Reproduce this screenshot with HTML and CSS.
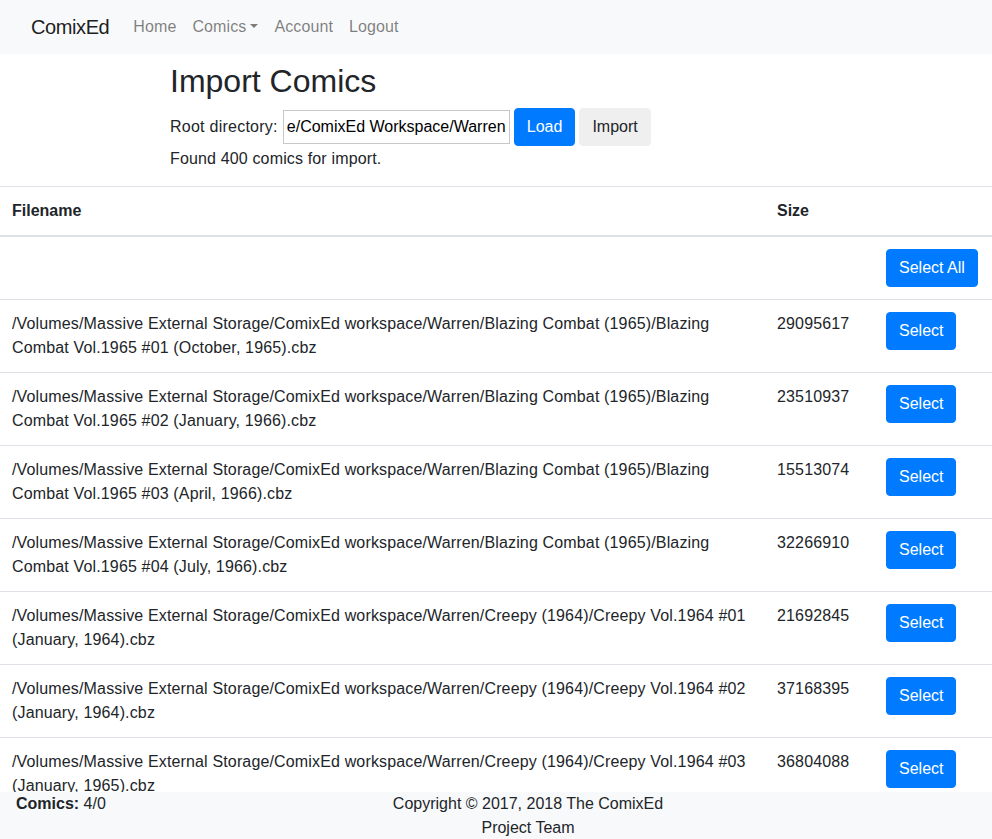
FILE: index.html
```html
<!DOCTYPE html>
<html lang="en">
<head>
<meta charset="utf-8">
<title>ComixEd - Import Comics</title>
<link rel="stylesheet" href="styles.css">
</head>
<body>
<nav class="navbar">
  <a class="brand" href="#">ComixEd</a>
  <ul class="nav">
    <li><a class="nav-link" href="#">Home</a></li>
    <li><a class="nav-link dropdown-toggle" href="#">Comics</a></li>
    <li><a class="nav-link" href="#">Account</a></li>
    <li><a class="nav-link" href="#">Logout</a></li>
  </ul>
</nav>

<main class="page">
  <section class="import-head">
    <h2 class="title">Import Comics</h2>
    <div class="dir-row">
      <label class="dir-label" for="rootdir">Root directory:</label>
      <input id="rootdir" class="dir-input" type="text" value="e/ComixEd Workspace/Warren">
      <button class="btn btn-primary" type="button">Load</button>
      <button class="btn btn-plain" type="button">Import</button>
    </div>
    <p class="found">Found 400 comics for import.</p>
  </section>

  <table class="table">
    <colgroup>
      <col class="c-name">
      <col class="c-size">
      <col class="c-act">
    </colgroup>
    <thead>
      <tr><th>Filename</th><th>Size</th><th></th></tr>
    </thead>
    <tbody>
      <tr><td></td><td></td><td><button class="btn btn-primary" type="button">Select All</button></td></tr>
      <tr><td>/Volumes/Massive External Storage/ComixEd workspace/Warren/Blazing Combat (1965)/Blazing Combat Vol.1965 #01 (October, 1965).cbz</td><td>29095617</td><td><button class="btn btn-primary" type="button">Select</button></td></tr>
      <tr><td>/Volumes/Massive External Storage/ComixEd workspace/Warren/Blazing Combat (1965)/Blazing Combat Vol.1965 #02 (January, 1966).cbz</td><td>23510937</td><td><button class="btn btn-primary" type="button">Select</button></td></tr>
      <tr><td>/Volumes/Massive External Storage/ComixEd workspace/Warren/Blazing Combat (1965)/Blazing Combat Vol.1965 #03 (April, 1966).cbz</td><td>15513074</td><td><button class="btn btn-primary" type="button">Select</button></td></tr>
      <tr><td>/Volumes/Massive External Storage/ComixEd workspace/Warren/Blazing Combat (1965)/Blazing Combat Vol.1965 #04 (July, 1966).cbz</td><td>32266910</td><td><button class="btn btn-primary" type="button">Select</button></td></tr>
      <tr><td>/Volumes/Massive External Storage/ComixEd workspace/Warren/Creepy (1964)/Creepy Vol.1964 #01 (January, 1964).cbz</td><td>21692845</td><td><button class="btn btn-primary" type="button">Select</button></td></tr>
      <tr><td>/Volumes/Massive External Storage/ComixEd workspace/Warren/Creepy (1964)/Creepy Vol.1964 #02 (January, 1964).cbz</td><td>37168395</td><td><button class="btn btn-primary" type="button">Select</button></td></tr>
      <tr><td>/Volumes/Massive External Storage/ComixEd workspace/Warren/Creepy (1964)/Creepy Vol.1964 #03 (January, 1965).cbz</td><td>36804088</td><td><button class="btn btn-primary" type="button">Select</button></td></tr>
    </tbody>
  </table>
</main>

<footer class="footer">
  <div class="f-left"><strong>Comics:</strong> 4/0</div>
  <div class="f-center">Copyright © 2017, 2018 The ComixEd Project Team</div>
  <div class="f-right"></div>
</footer>
</body>
</html>
```
FILE: styles.css
```css
* { box-sizing: border-box; }

html, body {
  margin: 0;
  padding: 0;
}

body {
  font-family: "Liberation Sans", Arial, Helvetica, sans-serif;
  font-size: 16px;
  line-height: 1.5;
  color: #212529;
  background: #fff;
}

a { text-decoration: none; }

/* navbar */
.navbar {
  display: flex;
  align-items: center;
  height: 54px;
  padding: 0 31px;
  background: #f8f9fa;
}

.brand {
  font-size: 20px;
  line-height: 30px;
  letter-spacing: -0.4px;
  color: rgba(0, 0, 0, 0.9);
  margin-right: 16px;
}

.nav {
  display: flex;
  list-style: none;
  margin: 0;
  padding: 0;
}

.nav-link {
  display: block;
  padding: 8px;
  line-height: 24px;
  letter-spacing: 0.1px;
  color: rgba(0, 0, 0, 0.5);
}

.dropdown-toggle::after {
  content: "";
  display: inline-block;
  margin-left: 0.255em;
  vertical-align: 0.255em;
  border-top: 0.3em solid;
  border-right: 0.3em solid transparent;
  border-left: 0.3em solid transparent;
  border-bottom: 0;
}

/* heading block */
.import-head {
  padding-left: 170px;
  padding-top: 8px;
}

.title {
  font-size: 32px;
  font-weight: 500;
  line-height: 1.2;
  margin: 0 0 8px;
}

.dir-row {
  display: flex;
  align-items: center;
  height: 38px;
  letter-spacing: 0.25px;
}

.dir-label {
  margin-right: 5px;
}

.dir-input {
  width: 227px;
  height: 34px;
  padding: 1px 2px 1px 3px;
  border: 1px solid #c8c8c8;
  font-family: "Liberation Sans", Arial, sans-serif;
  font-size: 16px;
  letter-spacing: 0;
  color: #000;
  margin-right: 4px;
}

.dir-row .btn { margin-right: 4px; }

.found {
  margin: 0 0 16px;
  padding-top: 1px;
  line-height: 23px;
  letter-spacing: 0.15px;
}

/* buttons */
.btn {
  display: inline-block;
  font-family: "Liberation Sans", Arial, sans-serif;
  font-size: 16px;
  line-height: 24px;
  padding: 6px 12px;
  border: 1px solid transparent;
  border-radius: 4px;
  cursor: pointer;
  white-space: nowrap;
}

.btn-primary {
  color: #fff;
  background: #007bff;
  border-color: #007bff;
}

.btn-plain {
  color: #212529;
  background: #efefef;
  border-color: #efefef;
}

/* table */
.table {
  width: 100%;
  border-collapse: collapse;
  table-layout: fixed;
}

.c-name { width: 765px; }
.c-size { width: 109px; }
.c-act  { width: 118px; }

.table th,
.table td {
  padding: 12px;
  vertical-align: top;
  text-align: left;
  border-top: 1px solid #dee2e6;
  letter-spacing: 0.15px;
}

.table th { font-weight: 700; letter-spacing: 0; }

.table thead th {
  border-bottom: 2px solid #dee2e6;
}

/* footer */
.footer {
  position: fixed;
  left: 0;
  right: 0;
  bottom: 0;
  height: 47px;
  background: #f8f9fa;
  display: grid;
  grid-template-columns: 362px 300px 1fr;
  padding: 0 16px;
  line-height: 24px;
}

.f-center { text-align: center; }
```
